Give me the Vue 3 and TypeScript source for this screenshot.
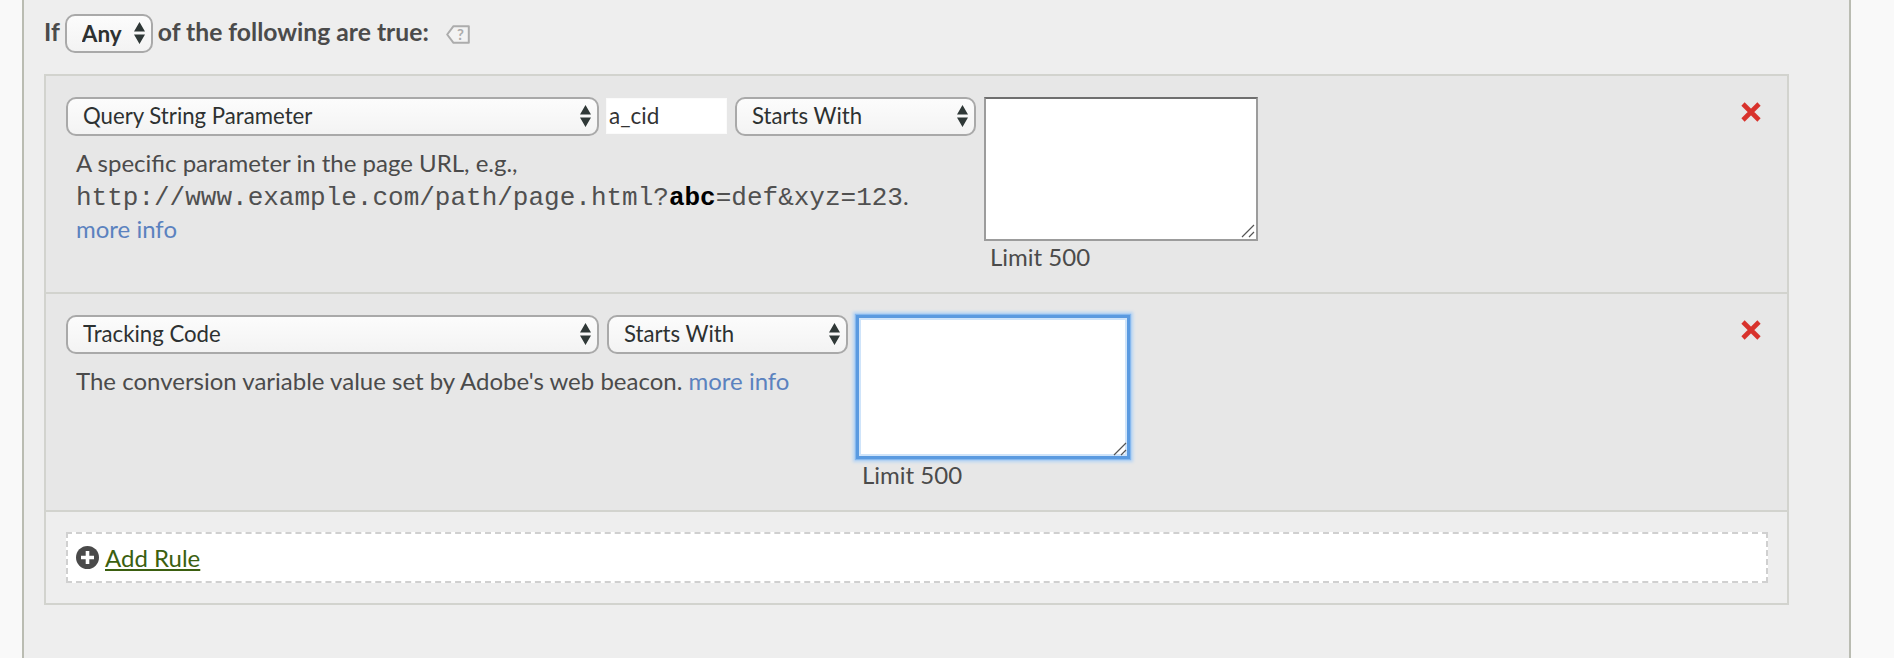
<script setup lang="ts">
const fieldTypes: string[] = ['Query String Parameter', 'Tracking Code'];
const matchTypes: string[] = ['Starts With', 'Ends With', 'Contains'];
</script>

<template>
	<div class="panel">
		<div class="heading">
			<span>If</span>
			<span class="select-wrap any">
				<select><option>Any</option><option>All</option></select>
				<svg class="arrows" width="11" height="22" viewBox="0 0 11 22"><path d="M5.5 0 11 9.5H0zM5.5 22 0 12.5h11z" /></svg>
			</span>
			<span>of the following are true:</span>
			<svg class="tag" width="24" height="19" viewBox="0 0 24 19">
				<path d="M22.8 1.2H7.5L1.2 9.5 7.5 17.8h15.3z" fill="#f3f3f3" stroke="#acacac" stroke-width="2" stroke-linejoin="round" />
				<text x="14.5" y="15" text-anchor="middle" font-size="15" font-weight="700" fill="#acacac" font-family="Lato, sans-serif">?</text>
			</svg>
		</div>

		<div class="rules">
			<div class="rule">
				<div class="rule-main">
					<div class="fields">
						<span class="select-wrap field">
							<select><option v-for="t in fieldTypes" :key="t">{{ t }}</option></select>
							<svg class="arrows" width="11" height="22" viewBox="0 0 11 22"><path d="M5.5 0 11 9.5H0zM5.5 22 0 12.5h11z" /></svg>
						</span>
						<input class="param" type="text" value="a_cid" />
						<span class="select-wrap match">
							<select><option v-for="m in matchTypes" :key="m">{{ m }}</option></select>
							<svg class="arrows" width="11" height="22" viewBox="0 0 11 22"><path d="M5.5 0 11 9.5H0zM5.5 22 0 12.5h11z" /></svg>
						</span>
					</div>
					<p class="desc">
						A specific parameter in the page URL, e.g.,
						<code>http://www.example.com/path/page.html?<b>abc</b>=def&amp;xyz=123</code>.
						<a href="#">more info</a>
					</p>
				</div>
				<div class="value">
					<textarea></textarea>
					<svg class="grip" width="14" height="14" viewBox="0 0 14 14"><path d="M1 13 13 1M8 13l5-5" /></svg>
					<div class="limit">Limit 500</div>
				</div>
				<svg class="remove" width="20" height="20" viewBox="0 0 20 20"><path d="M2 2 18 18M18 2 2 18" /></svg>
			</div>

			<div class="rule">
				<div class="rule-main">
					<div class="fields">
						<span class="select-wrap field">
							<select><option>{{ fieldTypes[1] }}</option></select>
							<svg class="arrows" width="11" height="22" viewBox="0 0 11 22"><path d="M5.5 0 11 9.5H0zM5.5 22 0 12.5h11z" /></svg>
						</span>
						<span class="select-wrap match">
							<select><option v-for="m in matchTypes" :key="m">{{ m }}</option></select>
							<svg class="arrows" width="11" height="22" viewBox="0 0 11 22"><path d="M5.5 0 11 9.5H0zM5.5 22 0 12.5h11z" /></svg>
						</span>
					</div>
					<p class="desc">
						The conversion variable value set by Adobe's web beacon.
						<a href="#">more info</a>
					</p>
				</div>
				<div class="value">
					<textarea class="focused"></textarea>
					<svg class="grip" width="14" height="14" viewBox="0 0 14 14"><path d="M1 13 13 1M8 13l5-5" /></svg>
					<div class="limit">Limit 500</div>
				</div>
				<svg class="remove" width="20" height="20" viewBox="0 0 20 20"><path d="M2 2 18 18M18 2 2 18" /></svg>
			</div>

			<div class="footer">
				<div class="add-box">
					<svg class="plus" width="23" height="23" viewBox="0 0 23 23">
						<circle cx="11.5" cy="11.5" r="11.5" fill="#4a4a4a" />
						<path d="M11.5 5v13M5 11.5h13" stroke="#fff" stroke-width="3.6" />
					</svg>
					<a class="add-link" href="#">Add Rule</a>
				</div>
			</div>
		</div>
	</div>
</template>

<style>
html,
body {
	background: #f9f9f9;
	overflow: hidden;
}
</style>

<style scoped>
.panel {
	box-sizing: border-box;
	width: 1829px;
	height: 658px;
	margin-left: 22px;
	padding: 14px 0 0 20px;
	background: #eeeeee;
	border-left: 2px solid #babcb2;
	border-right: 2px solid #babcb2;
	font-family: "Lato", sans-serif;
	font-size: 24px;
	color: #4b4b4b;
}

.heading {
	display: flex;
	align-items: center;
	gap: 5px;
	height: 39px;
	font-weight: 700;
	font-size: 24.7px;
	line-height: 36px;
}

.heading > span:not(.select-wrap) {
	margin-bottom: 3px;
}

.select-wrap {
	position: relative;
	display: inline-block;
	height: 39px;
	flex: none;
}

.select-wrap select {
	box-sizing: border-box;
	display: block;
	width: 100%;
	height: 100%;
	padding: 0 24px 2px 15px;
	appearance: none;
	border: 2px solid #a9a9a9;
	border-radius: 10px;
	background: linear-gradient(#fcfcfc, #f3f3f3);
	font-family: inherit;
	font-size: 22.2px;
	color: #2d3131;
}

.arrows {
	position: absolute;
	top: 8px;
	right: 8px;
	fill: #2f3837;
	pointer-events: none;
}

.any {
	width: 88px;
}

.any select {
	padding-bottom: 0;
	font-weight: 700;
	font-size: 22.5px;
}

.field {
	width: 533px;
}

.match {
	width: 241px;
}

.tag {
	margin-left: 12px;
	margin-top: 2px;
}

.rules {
	box-sizing: border-box;
	width: 1745px;
	margin-top: 21px;
	border: 2px solid #d2d3ce;
}

.rule {
	box-sizing: border-box;
	display: flex;
	height: 218px;
	padding: 21px 26px 0 20px;
	background: #e7e7e7;
	border-bottom: 2px solid #d2d3ce;
}

.rule-main {
	width: min-content;
}

.fields {
	display: flex;
	gap: 8px;
}

.param {
	box-sizing: border-box;
	width: 121px;
	height: 36px;
	margin: 1px 0 0 -1px;
	padding: 0 2px 2px;
	border: 1px solid #fbfbfb;
	background: #ffffff;
	font-family: inherit;
	font-size: 22.5px;
	color: #333333;
	outline: none;
}

.desc {
	margin: 10px 0 0;
	padding: 0 20px 0 10px;
	line-height: 33px;
}

.desc code {
	font-family: "Liberation Mono", monospace;
	font-size: 26px;
	line-height: 0;
	color: #505050;
}

.desc b {
	color: #000000;
}

.desc a {
	color: #5b82bf;
	text-decoration: none;
	white-space: nowrap;
}

.value {
	position: relative;
	margin-left: 8px;
}

.value textarea {
	box-sizing: border-box;
	display: block;
	width: 274px;
	height: 144px;
	margin: 0;
	resize: none;
	background: #ffffff;
	border: 2px solid #9c9c9c;
	border-top-color: #6f6f6f;
	border-radius: 0;
	outline: none;
}

.value textarea.focused {
	border: 3px solid #5a9ae0;
	box-shadow: 0 0 1px 1px #86b8ee, 0 0 3px 3px #b4d4f5, inset 0 0 0 2px #cfe4fa;
}

.grip {
	position: absolute;
	top: 127px;
	left: 257px;
	fill: none;
	stroke: #555555;
	stroke-width: 1.2;
	pointer-events: none;
}

.limit {
	margin-top: 1px;
	padding-left: 6px;
	line-height: 30px;
}

.remove {
	margin: 5px 0 0 auto;
	flex: none;
	fill: none;
	stroke: #d8322c;
	stroke-width: 4.6;
}

.footer {
	padding: 20px;
}

.add-box {
	box-sizing: border-box;
	display: flex;
	align-items: center;
	gap: 6px;
	width: 1702px;
	height: 51px;
	padding-left: 8px;
	background: #ffffff;
	border: 2px dashed #d0d0d0;
}

.add-link {
	color: #3b5f10;
	text-decoration: underline;
}
</style>
